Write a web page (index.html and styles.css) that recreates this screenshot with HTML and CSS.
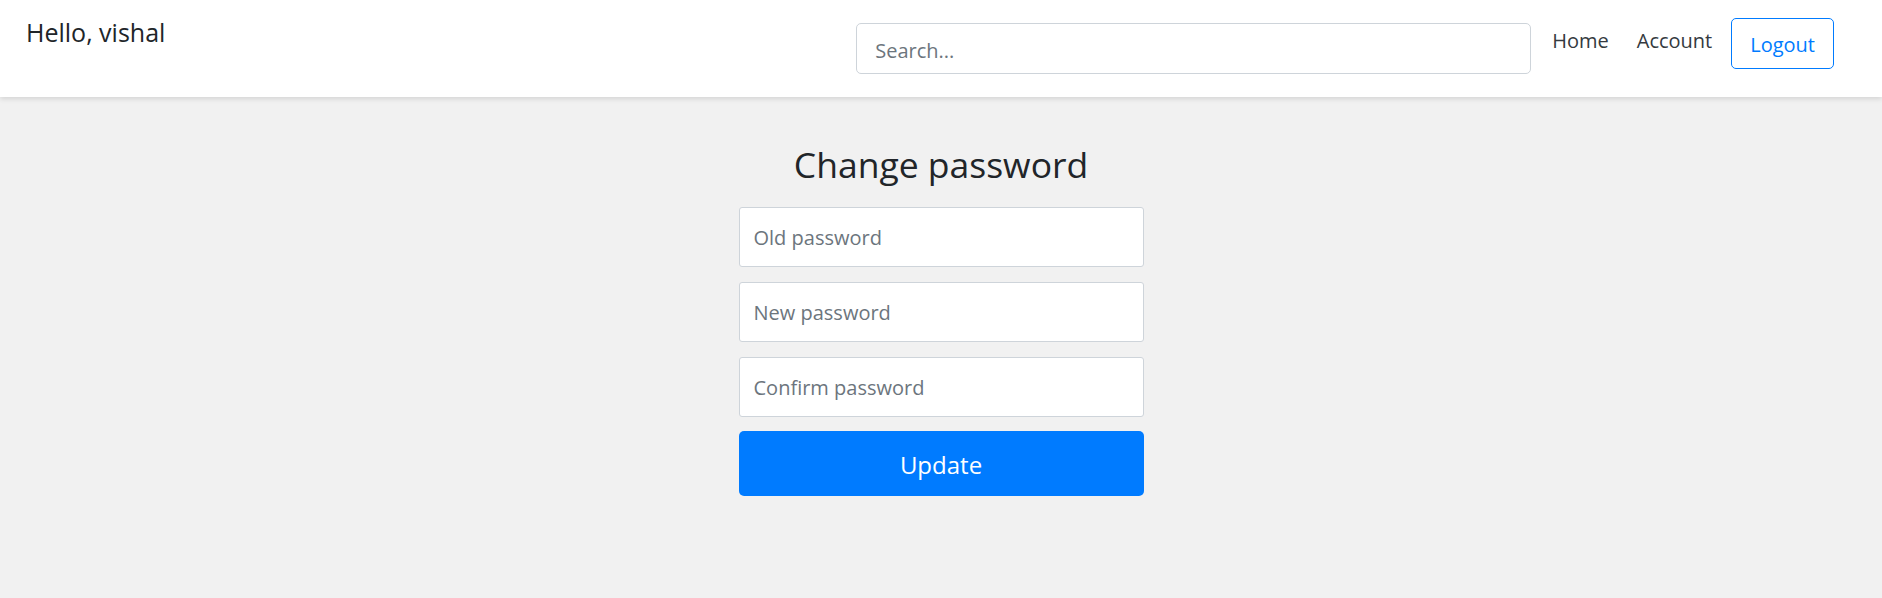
FILE: index.html
```html
<!DOCTYPE html>
<html lang="en">
<head>
<meta charset="utf-8">
<title>Change password</title>
<link rel="stylesheet" href="styles.css">
</head>
<body>
<nav class="navbar">
  <a class="brand" href="#">Hello, vishal</a>
  <div class="nav-right">
    <input class="search" type="text" placeholder="Search...">
    <a class="nav-link" href="#">Home</a>
    <a class="nav-link" href="#">Account</a>
    <button class="btn-logout" type="button">Logout</button>
  </div>
</nav>
<main class="main">
  <form class="pw-form">
    <h2 class="title">Change password</h2>
    <input class="field" type="password" placeholder="Old password">
    <input class="field" type="password" placeholder="New password">
    <input class="field" type="password" placeholder="Confirm password">
    <button class="btn-update" type="button">Update</button>
  </form>
</main>
</body>
</html>
```
FILE: styles.css
```css
* { box-sizing: border-box; }
html, body { margin: 0; padding: 0; }
body {
  background: #f1f1f1;
  font-family: "Open Sans", "Noto Sans", sans-serif;
  color: #212529;
  min-height: 598px;
}
.navbar {
  height: 97px;
  background: #fff;
  box-shadow: 0 2px 5px rgba(0, 0, 0, 0.12);
  display: flex;
  align-items: flex-start;
  justify-content: space-between;
  padding: 14px 48px 0 26px;
  position: relative;
}
.brand {
  font-size: 25px;
  line-height: 37.5px;
  color: #212529;
  text-decoration: none;
}
.nav-right {
  display: flex;
  align-items: flex-start;
  padding-top: 4px;
}
.search {
  width: 675px;
  height: 51px;
  margin-top: 5px;
  margin-right: 7px;
  padding: 12px 18px 8px;
  border: 1px solid #ced4da;
  border-radius: 5px;
  font-family: inherit;
  font-size: 20px;
  color: #495057;
  background: #fff;
  outline: none;
}
.search::placeholder, .field::placeholder { color: #6c757d; opacity: 1; }
.nav-link {
  margin-top: 8px;
  padding: 0 14px;
  font-size: 20px;
  line-height: 30px;
  color: #343a40;
  text-decoration: none;
}
.btn-logout {
  margin-left: 5px;
  height: 51px;
  padding: 2px 18px 0;
  border: 1px solid #007bff;
  border-radius: 5px;
  background: #fff;
  color: #007bff;
  font-family: inherit;
  font-size: 20px;
  line-height: 29px;
}
.main {
  padding-top: 46px;
}
.pw-form {
  width: 405px;
  margin: 0 auto;
  display: flex;
  flex-direction: column;
}
.title {
  margin: 0 0 22px;
  font-size: 35.5px;
  font-weight: 400;
  line-height: 42px;
  text-align: center;
  color: #212529;
}
.field {
  height: 60px;
  margin-bottom: 15px;
  padding: 0 14px;
  border: 1px solid #ced4da;
  border-radius: 3px;
  background: #fff;
  font-family: inherit;
  font-size: 20px;
  color: #495057;
  outline: none;
}
.field:last-of-type { margin-bottom: 14px; }
.btn-update {
  height: 65px;
  padding: 2px 0 0;
  border: 0;
  border-radius: 5px;
  background: #007bff;
  color: #fff;
  font-family: inherit;
  font-size: 24px;
}
```
